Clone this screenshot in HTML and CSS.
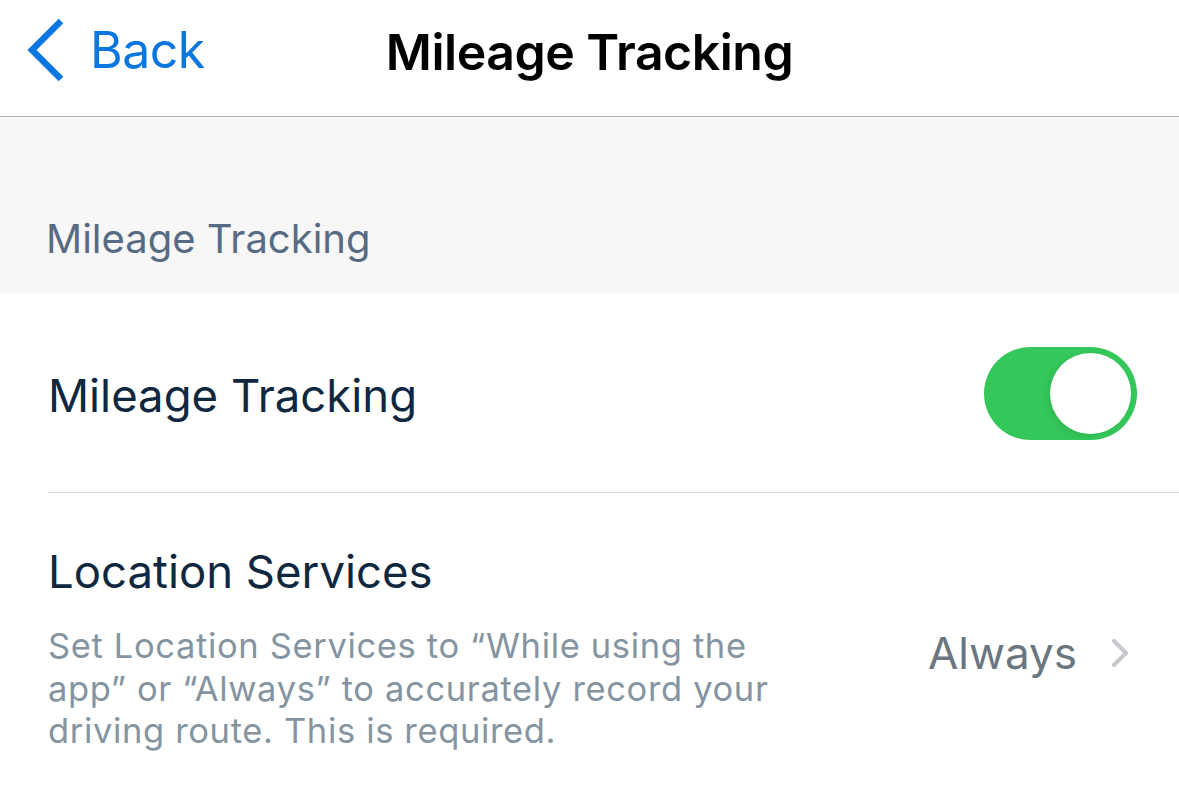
FILE: index.html
```html
<!DOCTYPE html>
<html>
<head>
<meta charset="utf-8">
<link rel="stylesheet" href="styles.css">
</head>
<body>
<div class="screen">
  <header class="navbar">
    <div class="back">
      <svg class="back-chevron" width="40" height="64" viewBox="0 0 40 64"><polyline points="35,3 6,32 35,61" fill="none" stroke="#0a76e0" stroke-width="6.5" stroke-linecap="butt" stroke-linejoin="miter"/></svg>
      <span class="back-label">Back</span>
    </div>
    <h1 class="nav-title">Mileage Tracking</h1>
  </header>
  <section class="section-head">
    <span class="section-title">Mileage Tracking</span>
  </section>
  <div class="list">
    <div class="row row-toggle">
      <span class="row-title">Mileage Tracking</span>
      <div class="switch"><div class="knob"></div></div>
    </div>
    <div class="row row-location">
      <div class="row-text">
        <div class="row-title">Location Services</div>
        <p class="row-desc">Set Location Services to “While using the app” or “Always” to accurately record your driving route. This is required.</p>
      </div>
      <div class="row-value">
        <span class="value">Always</span>
        <svg class="disclosure" width="18" height="28" viewBox="0 0 18 28"><polyline points="3,2 15,14 3,26" fill="none" stroke="#c7c7cc" stroke-width="4" stroke-linecap="round" stroke-linejoin="round"/></svg>
      </div>
    </div>
  </div>
</div>
</body>
</html>
```

FILE: styles.css
```css
* { box-sizing: border-box; }
html, body { margin: 0; padding: 0; background: #fff; }
body { font-family: Inter, "Noto Sans", sans-serif; width: 1179px; height: 798px; overflow: hidden; }
.screen { display: flex; flex-direction: column; }
.navbar {
  height: 117px;
  border-bottom: 1px solid #b2b2b2;
  position: relative;
  display: flex;
  align-items: center;
  justify-content: center;
}
.back {
  position: absolute;
  left: 26px;
  top: 18px;
  display: flex;
  align-items: center;
  gap: 24px;
}
.back-label {
  font-size: 50px;
  color: #0a76e0;
  letter-spacing: -0.5px;
}
.nav-title {
  margin: 0 0 12px 0;
  font-size: 50px;
  font-weight: 600;
  color: #000;
  letter-spacing: -0.5px;
}
.section-head {
  height: 176px;
  background: #f7f7f7;
  display: flex;
  align-items: flex-end;
  padding: 0 0 30px 46px;
}
.section-title {
  font-size: 40px;
  color: #586b84;
}
.list { display: flex; flex-direction: column; padding-left: 48px; }
.row { display: flex; align-items: center; }
.row-toggle {
  height: 200px;
  border-bottom: 1px solid #d8d8d8;
  justify-content: space-between;
  padding: 6px 42px 0 0;
}
.row-title {
  font-size: 45.5px;
  color: #0f2840;
}
.switch {
  width: 153px;
  height: 93px;
  border-radius: 47px;
  background: #34c759;
  padding: 6px;
  display: flex;
  justify-content: flex-end;
  align-items: center;
  margin-top: -4px;
}
.knob {
  width: 81px;
  height: 81px;
  border-radius: 50%;
  background: #fff;
  box-shadow: -3px 2px 6px rgba(0,0,0,0.08);
}
.row-location {
  align-items: flex-start;
  justify-content: space-between;
  padding-top: 51px;
  padding-right: 50px;
}
.row-desc {
  margin: 26px 0 0 0;
  width: 760px;
  font-size: 34.5px;
  line-height: 42.5px;
  letter-spacing: 0.65px;
  color: #8594a1;
}
.row-value {
  display: flex;
  align-items: center;
  gap: 34px;
  margin-top: 82px;
}
.value { font-size: 44px; color: #6a7680; }
```
